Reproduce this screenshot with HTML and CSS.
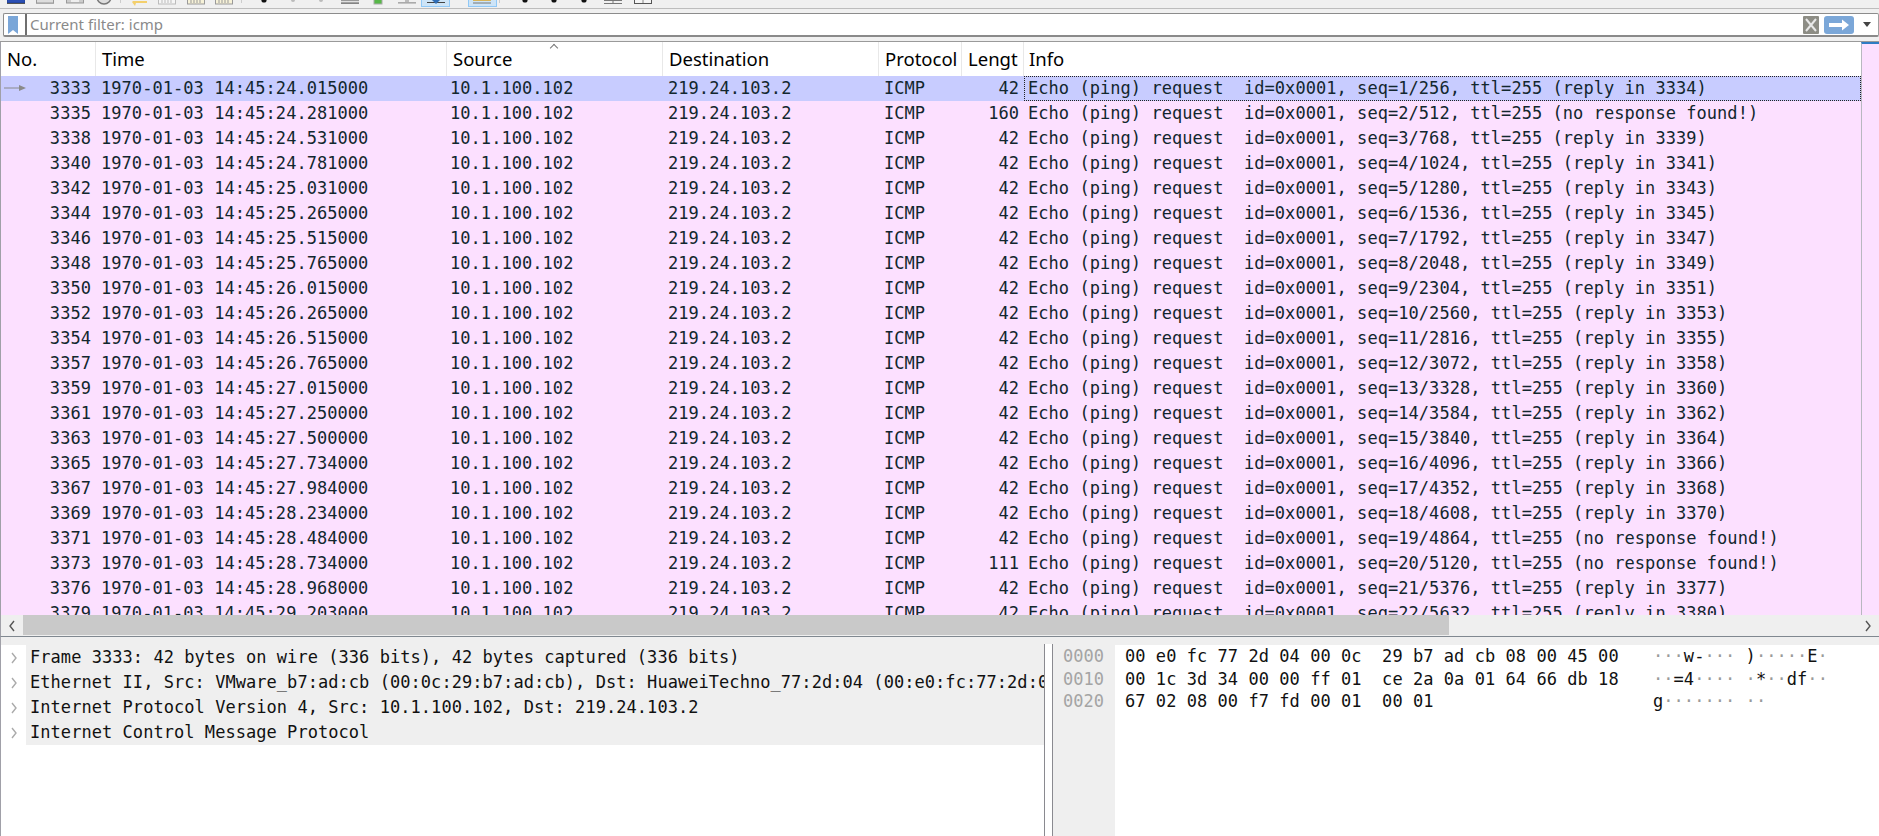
FILE: index.html
```html
<!DOCTYPE html>
<html lang="en">
<head>
<meta charset="utf-8">
<title>Wireshark</title>
<link rel="stylesheet" href="styles.css">
</head>
<body>
<div class="app">
  <div class="toolbar">
    <div class="tb-group g1">
      <svg class="ico" viewBox="0 0 18 8"><rect x="0" y="-4" width="18" height="7" fill="#2b4fb5" stroke="#23408f"/><rect x="0" y="3" width="18" height="1" fill="#555"/></svg>
      <svg class="ico" viewBox="0 0 18 8"><rect x="0.5" y="-4" width="17" height="7" fill="#ddd" stroke="#999"/><rect x="0" y="3" width="18" height="1" fill="#aaa"/></svg>
      <svg class="ico" viewBox="0 0 18 8"><rect x="0.5" y="-4" width="17" height="7" fill="#ccc" stroke="#999"/><rect x="5" y="-2" width="8" height="4" fill="#eee"/></svg>
      <svg class="ico" viewBox="0 0 18 8"><circle cx="9" cy="-3" r="7" fill="#ddd" stroke="#777" stroke-width="1.5"/><circle cx="9" cy="-3" r="3" fill="#666"/></svg>
    </div>
    <i class="tb-sep"></i>
    <div class="tb-group g2">
      <svg class="ico" viewBox="0 0 18 8"><path d="M3 1h14v2H6l-1 3-3-4z" fill="#f3cf6c"/></svg>
      <svg class="ico" viewBox="0 0 18 8"><rect x="0.5" y="-4" width="17" height="8" fill="#f6f6f6" stroke="#bbb"/><path d="M4 0v3M7 0v3M10 0v3M13 0v3" stroke="#bbb"/></svg>
      <svg class="ico" viewBox="0 0 18 8"><rect x="0.5" y="-4" width="17" height="8" fill="#f7f2d8" stroke="#999"/><path d="M4 0v3M7 0v3M10 0v3M13 0v3" stroke="#999"/></svg>
      <svg class="ico" viewBox="0 0 18 8"><rect x="0.5" y="-4" width="17" height="8" fill="#f7f2d8" stroke="#999"/><path d="M4 0v3M7 0v3M10 0v3M13 0v3" stroke="#999"/></svg>
    </div>
    <i class="tb-sep"></i>
    <div class="tb-group g3">
      <svg class="ico" viewBox="0 0 18 8"><circle cx="9" cy="0" r="2.6" fill="#111"/></svg>
      <svg class="ico" viewBox="0 0 18 8"><circle cx="9" cy="0" r="2" fill="#bbb"/></svg>
      <svg class="ico" viewBox="0 0 18 8"><circle cx="9" cy="0" r="2" fill="#bbb"/></svg>
      <svg class="ico" viewBox="0 0 18 8"><rect x="0" y="0" width="18" height="1.2" fill="#999"/><rect x="0" y="2.5" width="18" height="1.2" fill="#555"/></svg>
      <svg class="ico" viewBox="0 0 18 8"><rect x="5" y="-3" width="8" height="7" fill="#57b848" stroke="#aaa"/></svg>
      <svg class="ico" viewBox="0 0 18 8"><rect x="0" y="2" width="18" height="1.6" fill="#aaa"/><rect x="7" y="-3" width="4" height="5" fill="#bbb"/></svg>
      <span class="tb-btn"><svg class="ico" viewBox="0 0 18 8"><rect x="0" y="3" width="18" height="1" fill="#444"/><path d="M4 0h10L9 5z" fill="#2f6db5"/></svg></span>
      <span class="tb-btn"><svg class="ico" viewBox="0 0 18 8"><rect x="0" y="1" width="18" height="1" fill="#d8b45a"/><rect x="0" y="3.5" width="18" height="1" fill="#777"/></svg></span>
    </div>
    <i class="tb-sep"></i>
    <div class="tb-group g4">
      <svg class="ico" viewBox="0 0 18 8"><circle cx="9" cy="0" r="2.6" fill="#111"/></svg>
      <svg class="ico" viewBox="0 0 18 8"><circle cx="9" cy="0" r="2.6" fill="#111"/></svg>
      <svg class="ico" viewBox="0 0 18 8"><circle cx="9" cy="0" r="2.6" fill="#111"/></svg>
      <svg class="ico" viewBox="0 0 18 8"><path d="M0 .5h18M0 3.5h18M9 0v3" stroke="#777" fill="none"/></svg>
      <svg class="ico" viewBox="0 0 18 8"><rect x="0.5" y="-3" width="17" height="6.5" fill="#f4f4f4" stroke="#555"/><path d="M9 -3v6" stroke="#888"/></svg>
    </div>
  </div>

  <div class="filter-bar">
    <div class="filter">
      <svg class="bookmark" viewBox="0 0 10 18"><path d="M0 0h10v18L5 14 0 18z" fill="#7aa6d8"/></svg>
      <span class="filter-text">Current filter: icmp</span>
      <svg class="clear" viewBox="0 0 16 18"><rect width="16" height="18" rx="1" fill="#8d8d85"/><path d="M3 3l10 12M13 3L3 15" stroke="#e8e8e8" stroke-width="2" fill="none"/></svg>
      <svg class="apply" viewBox="0 0 30 18"><rect width="30" height="18" rx="3" fill="#7ba7d8"/><path d="M5 7h13V3.5L25 9l-7 5.5V11H5z" fill="#fff"/></svg>
      <svg class="drop" viewBox="0 0 8 5"><path d="M0 0h8L4 5z" fill="#444"/></svg>
    </div>
  </div>

  <div class="list-pane">
    <div class="list">
      <div class="row head">
        <span>No.</span><span>Time</span><span class="sorted">Source</span><span>Destination</span><span>Protocol</span><span>Lengt</span><span>Info</span>
      </div>
      <div class="row sel"><span class="num"><svg class="cur" viewBox="0 0 22 6"><path d="M0 3h16" stroke="#8a8a8a" stroke-width="1"/><path d="M15 0l7 3-7 3z" fill="#8a8a8a"/></svg>3333</span><span>1970-01-03 14:45:24.015000</span><span>10.1.100.102</span><span>219.24.103.2</span><span>ICMP</span><span class="num">42</span><span class="focus">Echo (ping) request  id=0x0001, seq=1/256, ttl=255 (reply in 3334)</span></div>
      <div class="row"><span class="num">3335</span><span>1970-01-03 14:45:24.281000</span><span>10.1.100.102</span><span>219.24.103.2</span><span>ICMP</span><span class="num">160</span><span>Echo (ping) request  id=0x0001, seq=2/512, ttl=255 (no response found!)</span></div>
      <div class="row"><span class="num">3338</span><span>1970-01-03 14:45:24.531000</span><span>10.1.100.102</span><span>219.24.103.2</span><span>ICMP</span><span class="num">42</span><span>Echo (ping) request  id=0x0001, seq=3/768, ttl=255 (reply in 3339)</span></div>
      <div class="row"><span class="num">3340</span><span>1970-01-03 14:45:24.781000</span><span>10.1.100.102</span><span>219.24.103.2</span><span>ICMP</span><span class="num">42</span><span>Echo (ping) request  id=0x0001, seq=4/1024, ttl=255 (reply in 3341)</span></div>
      <div class="row"><span class="num">3342</span><span>1970-01-03 14:45:25.031000</span><span>10.1.100.102</span><span>219.24.103.2</span><span>ICMP</span><span class="num">42</span><span>Echo (ping) request  id=0x0001, seq=5/1280, ttl=255 (reply in 3343)</span></div>
      <div class="row"><span class="num">3344</span><span>1970-01-03 14:45:25.265000</span><span>10.1.100.102</span><span>219.24.103.2</span><span>ICMP</span><span class="num">42</span><span>Echo (ping) request  id=0x0001, seq=6/1536, ttl=255 (reply in 3345)</span></div>
      <div class="row"><span class="num">3346</span><span>1970-01-03 14:45:25.515000</span><span>10.1.100.102</span><span>219.24.103.2</span><span>ICMP</span><span class="num">42</span><span>Echo (ping) request  id=0x0001, seq=7/1792, ttl=255 (reply in 3347)</span></div>
      <div class="row"><span class="num">3348</span><span>1970-01-03 14:45:25.765000</span><span>10.1.100.102</span><span>219.24.103.2</span><span>ICMP</span><span class="num">42</span><span>Echo (ping) request  id=0x0001, seq=8/2048, ttl=255 (reply in 3349)</span></div>
      <div class="row"><span class="num">3350</span><span>1970-01-03 14:45:26.015000</span><span>10.1.100.102</span><span>219.24.103.2</span><span>ICMP</span><span class="num">42</span><span>Echo (ping) request  id=0x0001, seq=9/2304, ttl=255 (reply in 3351)</span></div>
      <div class="row"><span class="num">3352</span><span>1970-01-03 14:45:26.265000</span><span>10.1.100.102</span><span>219.24.103.2</span><span>ICMP</span><span class="num">42</span><span>Echo (ping) request  id=0x0001, seq=10/2560, ttl=255 (reply in 3353)</span></div>
      <div class="row"><span class="num">3354</span><span>1970-01-03 14:45:26.515000</span><span>10.1.100.102</span><span>219.24.103.2</span><span>ICMP</span><span class="num">42</span><span>Echo (ping) request  id=0x0001, seq=11/2816, ttl=255 (reply in 3355)</span></div>
      <div class="row"><span class="num">3357</span><span>1970-01-03 14:45:26.765000</span><span>10.1.100.102</span><span>219.24.103.2</span><span>ICMP</span><span class="num">42</span><span>Echo (ping) request  id=0x0001, seq=12/3072, ttl=255 (reply in 3358)</span></div>
      <div class="row"><span class="num">3359</span><span>1970-01-03 14:45:27.015000</span><span>10.1.100.102</span><span>219.24.103.2</span><span>ICMP</span><span class="num">42</span><span>Echo (ping) request  id=0x0001, seq=13/3328, ttl=255 (reply in 3360)</span></div>
      <div class="row"><span class="num">3361</span><span>1970-01-03 14:45:27.250000</span><span>10.1.100.102</span><span>219.24.103.2</span><span>ICMP</span><span class="num">42</span><span>Echo (ping) request  id=0x0001, seq=14/3584, ttl=255 (reply in 3362)</span></div>
      <div class="row"><span class="num">3363</span><span>1970-01-03 14:45:27.500000</span><span>10.1.100.102</span><span>219.24.103.2</span><span>ICMP</span><span class="num">42</span><span>Echo (ping) request  id=0x0001, seq=15/3840, ttl=255 (reply in 3364)</span></div>
      <div class="row"><span class="num">3365</span><span>1970-01-03 14:45:27.734000</span><span>10.1.100.102</span><span>219.24.103.2</span><span>ICMP</span><span class="num">42</span><span>Echo (ping) request  id=0x0001, seq=16/4096, ttl=255 (reply in 3366)</span></div>
      <div class="row"><span class="num">3367</span><span>1970-01-03 14:45:27.984000</span><span>10.1.100.102</span><span>219.24.103.2</span><span>ICMP</span><span class="num">42</span><span>Echo (ping) request  id=0x0001, seq=17/4352, ttl=255 (reply in 3368)</span></div>
      <div class="row"><span class="num">3369</span><span>1970-01-03 14:45:28.234000</span><span>10.1.100.102</span><span>219.24.103.2</span><span>ICMP</span><span class="num">42</span><span>Echo (ping) request  id=0x0001, seq=18/4608, ttl=255 (reply in 3370)</span></div>
      <div class="row"><span class="num">3371</span><span>1970-01-03 14:45:28.484000</span><span>10.1.100.102</span><span>219.24.103.2</span><span>ICMP</span><span class="num">42</span><span>Echo (ping) request  id=0x0001, seq=19/4864, ttl=255 (no response found!)</span></div>
      <div class="row"><span class="num">3373</span><span>1970-01-03 14:45:28.734000</span><span>10.1.100.102</span><span>219.24.103.2</span><span>ICMP</span><span class="num">111</span><span>Echo (ping) request  id=0x0001, seq=20/5120, ttl=255 (no response found!)</span></div>
      <div class="row"><span class="num">3376</span><span>1970-01-03 14:45:28.968000</span><span>10.1.100.102</span><span>219.24.103.2</span><span>ICMP</span><span class="num">42</span><span>Echo (ping) request  id=0x0001, seq=21/5376, ttl=255 (reply in 3377)</span></div>
      <div class="row"><span class="num">3379</span><span>1970-01-03 14:45:29.203000</span><span>10.1.100.102</span><span>219.24.103.2</span><span>ICMP</span><span class="num">42</span><span>Echo (ping) request  id=0x0001, seq=22/5632, ttl=255 (reply in 3380)</span></div>
    </div>
    <div class="minimap"></div>
  </div>

  <div class="hscroll">
    <svg class="chev" viewBox="0 0 8 12"><path d="M6 1L2 6l4 5" fill="none" stroke="#555" stroke-width="1.4"/></svg>
    <div class="track"><div class="thumb"></div></div>
    <svg class="chev" viewBox="0 0 8 12"><path d="M2 1l4 5-4 5" fill="none" stroke="#555" stroke-width="1.4"/></svg>
  </div>

  <div class="bottom">
    <div class="tree">
      <div class="tree-row"><svg class="arrow" viewBox="0 0 8 12"><path d="M2 1l4 5-4 5" fill="none" stroke="#aaa" stroke-width="1.4"/></svg><span class="tree-text">Frame 3333: 42 bytes on wire (336 bits), 42 bytes captured (336 bits)</span></div>
      <div class="tree-row"><svg class="arrow" viewBox="0 0 8 12"><path d="M2 1l4 5-4 5" fill="none" stroke="#aaa" stroke-width="1.4"/></svg><span class="tree-text">Ethernet II, Src: VMware_b7:ad:cb (00:0c:29:b7:ad:cb), Dst: HuaweiTechno_77:2d:04 (00:e0:fc:77:2d:04)</span></div>
      <div class="tree-row"><svg class="arrow" viewBox="0 0 8 12"><path d="M2 1l4 5-4 5" fill="none" stroke="#aaa" stroke-width="1.4"/></svg><span class="tree-text">Internet Protocol Version 4, Src: 10.1.100.102, Dst: 219.24.103.2</span></div>
      <div class="tree-row"><svg class="arrow" viewBox="0 0 8 12"><path d="M2 1l4 5-4 5" fill="none" stroke="#aaa" stroke-width="1.4"/></svg><span class="tree-text">Internet Control Message Protocol</span></div>
    </div>
    <div class="split"></div>
    <div class="hex">
      <div class="offsets"><div>0000</div><div>0010</div><div>0020</div></div>
      <div class="bytes"><div>00 e0 fc 77 2d 04 00 0c  29 b7 ad cb 08 00 45 00</div><div>00 1c 3d 34 00 00 ff 01  ce 2a 0a 01 64 66 db 18</div><div>67 02 08 00 f7 fd 00 01  00 01</div></div>
      <div class="ascii"><div><i>···</i>w-<i>···</i> )<i>·····</i>E<i>·</i></div><div><i>··</i>=4<i>····</i> <i>·</i>*<i>··</i>df<i>··</i></div><div>g<i>·······</i> <i>··</i></div></div>
    </div>
  </div>
</div>
</body>
</html>
```

FILE: styles.css
```css
* { box-sizing: border-box; }
html, body { margin: 0; height: 100%; overflow: hidden; background: #fff; }
.app { width: 1879px; height: 836px; display: flex; flex-direction: column; overflow: hidden; }

.toolbar { height: 9px; flex: none; background: #f0f0f0; border-bottom: 1px solid #bdbdbd; display: flex; align-items: flex-start; padding-left: 7px; overflow: hidden; }
.tb-group { display: flex; align-items: flex-start; }
.ico { width: 18px; height: 8px; display: block; flex: none; }
.tb-sep { width: 1px; height: 3px; background: #ccc; flex: none; }
.g1 { gap: 11.3px; }
.g1 + .tb-sep { margin: 0 9px 0 7px; }
.g2 { gap: 10.5px; }
.g2 + .tb-sep { margin: 0 13px 0 8px; }
.g3 { gap: 10.5px; }
.g3 + .tb-sep { margin: 0 16px 0 2px; }
.g4 { gap: 11.5px; }
.tb-btn { width: 29px; height: 7px; background: #cde4f7; border: 1px solid #90c8f6; border-top: none; display: flex; justify-content: center; margin-left: -5px; flex: none; }
.tb-btn + .tb-btn { margin-left: 7px; }
.tb-btn .ico { margin-top: -1px; }

.filter-bar { height: 32px; flex: none; background: #f0f0f0; padding: 4px 0 4px 3px; }
.filter { height: 24px; background: #fff; border: 1px solid #8c8c8c; border-bottom: 2px solid #8a8a8a; border-right-color: #a0a0a0; border-radius: 2px; display: flex; align-items: center; padding-left: 4px; }
.bookmark { width: 10px; height: 18px; flex: none; }
.filter-text { margin-left: 7px; padding-left: 3px; height: 21px; border-left: 2px solid #6f6f6f; flex: 1; font: 15px/21px "Noto Sans", "Noto Sans CJK SC", sans-serif; color: #8a8a8a; }
.clear { width: 16px; height: 18px; flex: none; }
.apply { width: 30px; height: 18px; flex: none; margin-left: 5px; }
.drop { width: 8px; height: 5px; flex: none; margin: 0 7px 0 9px; }

.list-pane { height: 574px; flex: none; display: flex; border-top: 1px solid #9a9a9a; overflow: hidden; }
.list { flex: 1; min-width: 0; border-left: 1px solid #a0a0a8; overflow: hidden; }
.minimap { width: 18px; flex: none; background: #fce0ff; border-left: 1px solid #b8b8c0; border-top: 2px solid #2f7cc4; }
.row { display: grid; grid-template-columns: 95px 351px 216px 216px 83px 62px 1fr; height: 25px; background: #fce0ff; font: 17px/25px "DejaVu Sans Mono", monospace; letter-spacing: 0.05px; color: #12272e; white-space: pre; }
.row > span { padding-left: 5px; overflow: hidden; position: relative; }
.row > span:nth-child(3) { padding-left: 3px; }
.row > span:nth-child(7) { padding-left: 4px; }
.row > .num { padding: 0 5px 0 0; text-align: right; }
.row.sel { background: #c8ccff; }
.focus { outline: 1px dotted #222; outline-offset: -1px; }
.cur { position: absolute; left: 3px; top: 9px; width: 22px; height: 6px; }
.head { height: 34px; background: #fff; font: 18.5px/34px "Noto Sans", "Noto Sans CJK SC", sans-serif; letter-spacing: 0; color: #000; }
.head > span { padding-left: 6px; border-right: 1px solid #e8e8e8; }
.head > span:nth-child(3) { padding-left: 6px; }
.head > span:nth-child(7) { padding-left: 5px; }
.head > span:last-child { border-right: none; }
.sorted::before { content: ""; position: absolute; left: 104px; top: 3px; width: 5px; height: 5px; border-left: 1px solid #777; border-top: 1px solid #777; transform: rotate(45deg); }

.hscroll { height: 22px; flex: none; display: flex; align-items: center; background: #efefef; border-bottom: 1px solid #808890; border-left: 1px solid #a0a0a8; }
.chev { width: 8px; height: 12px; flex: none; margin: 0 7px; }
.track { flex: 1; height: 100%; padding-bottom: 1px; }
.thumb { width: 1426px; height: 100%; background: #c9c9c9; }

.bottom { flex: 1; min-height: 0; display: flex; border-left: 1px solid #a0a0a8; padding-top: 8px; background: linear-gradient(#efefef 8px, #fff 8px); font: 17px/25px "DejaVu Sans Mono", monospace; letter-spacing: 0.05px; color: #111; }
.tree { width: 1043px; flex: none; overflow: hidden; }
.tree-row { display: flex; align-items: center; height: 25px; }
.arrow { width: 8px; height: 12px; flex: none; margin: 0 8px 0 9px; }
.tree-text { flex: 1; min-width: 0; height: 25px; padding-left: 4px; background: #efefef; overflow: hidden; white-space: pre; }
.split { width: 9px; flex: none; margin-top: -1px; border-left: 1px solid #8a8a90; border-right: 1px solid #8a8a90; background: #fff; }
.hex { flex: 1; display: flex; line-height: 22.5px; white-space: pre; }
.offsets { width: 62px; flex: none; background: #efefef; padding-left: 10px; color: #a4a4a4; }
.bytes { width: 538px; flex: none; padding-left: 10px; }
.ascii i { font-style: normal; color: #9a9a9a; }
```
